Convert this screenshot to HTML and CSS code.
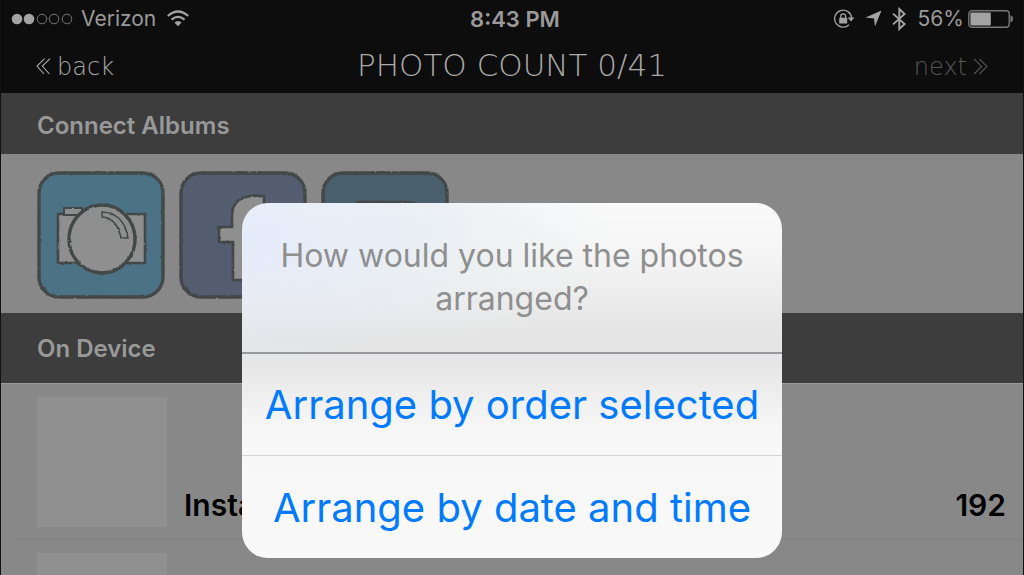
FILE: index.html
```html
<!DOCTYPE html>
<html lang="en">
<head>
<meta charset="UTF-8">
<meta name="viewport" content="width=device-width, initial-scale=1.0">
<title>Photo Count</title>
<link rel="stylesheet" href="styles.css">
</head>
<body>

<div class="screen">
    <header class="top">
        <div class="status-bar">
            <div class="status-left">
                <svg class="signal" width="62" height="12" viewBox="0 0 62 12">
                    <g fill="#a3a3a3">
                        <circle cx="6" cy="6" r="5.3"/>
                        <circle cx="18" cy="6" r="5.3"/>
                    </g>
                    <g fill="none" stroke="#777" stroke-width="1">
                        <circle cx="31" cy="6" r="4.8"/>
                        <circle cx="43" cy="6" r="4.8"/>
                        <circle cx="56" cy="6" r="4.8"/>
                    </g>
                </svg>
                <span class="carrier">Verizon</span>
                <svg class="wifi" width="22" height="17" viewBox="0 0 22 17">
                    <g fill="none" stroke="#a3a3a3" stroke-width="2.2">
                        <path d="M.8 6 Q11 -3 21.2 6"/>
                        <path d="M4.5 9.6 Q11 4 17.5 9.6"/>
                    </g>
                    <path d="M7.4 12.4 Q11 9.4 14.6 12.4 L11 16.2Z" fill="#a3a3a3"/>
                </svg>
            </div>
            <span class="time">8:43 PM</span>
            <div class="status-right">
                <svg width="22" height="20" viewBox="0 0 22 20">
                    <path d="M16 15.8 A8.5 8.5 0 1 1 18.6 9" fill="none" stroke="#a3a3a3" stroke-width="1.3"/>
                    <path d="M14.6 8.6h6.8L18 12.4Z" fill="#a3a3a3"/>
                    <rect x="6.2" y="8.8" width="8" height="5.8" rx=".6" fill="#a3a3a3"/>
                    <path d="M7.8 9V7.2a2.4 2.4 0 0 1 4.8 0V9" fill="none" stroke="#a3a3a3" stroke-width="1.3"/>
                </svg>
                <svg class="location" width="17" height="17" viewBox="0 0 17 17">
                    <path d="M16.5 .5 L10 16.5 L9 8.4 L.5 7.6Z" fill="#a3a3a3"/>
                </svg>
                <svg class="bluetooth" width="14" height="24" viewBox="0 0 14 24">
                    <path d="M1 6.6 L12.6 17 L7.3 22 V2 L12.6 7 L1 17.4" fill="none" stroke="#a3a3a3" stroke-width="1.9"/>
                </svg>
                <span class="percent">56%</span>
                <svg width="45" height="18" viewBox="0 0 45 18">
                    <rect x=".8" y=".8" width="40.4" height="16.4" rx="3" fill="none" stroke="#777" stroke-width="1.4"/>
                    <rect x="2.4" y="2.4" width="20.4" height="13.2" rx="1" fill="#a3a3a3"/>
                    <path d="M42.5 5.6 Q45 6 45 9 T42.5 12.4Z" fill="#777"/>
                </svg>
            </div>
        </div>
        <nav class="nav-bar">
            <a class="back" href="#">
                <svg width="15" height="17" viewBox="0 0 15 17">
                    <path d="M8.6 .7 L1 8 L8 16 M14 .7 L6.4 8 L13.4 16" fill="none" stroke="currentColor" stroke-width="1.1"/>
                </svg>
                back
            </a>
            <h1 class="title">PHOTO COUNT 0/41</h1>
            <a class="next" href="#">
                next
                <svg width="15" height="17" viewBox="0 0 15 17">
                    <path d="M1 1 L8.6 8.4 L1 16 M6.4 1 L14 8.4 L6.4 16" fill="none" stroke="currentColor" stroke-width="1.1"/>
                </svg>
            </a>
        </nav>
    </header>

    <main>
        <h2 class="section connect">Connect Albums</h2>
        <div class="albums">
            <button class="album" type="button" aria-label="Camera">
                <svg width="128" height="128" viewBox="0 0 128 128">
                    <defs>
                        <filter id="rough" x="-5%" y="-5%" width="110%" height="110%">
                            <feTurbulence type="fractalNoise" baseFrequency="0.25" numOctaves="2" seed="4" result="noise"/>
                            <feDisplacementMap in="SourceGraphic" in2="noise" scale="2.4" xChannelSelector="R" yChannelSelector="G"/>
                        </filter>
                    </defs>
                    <g filter="url(#rough)" stroke="#434746">
                        <rect x="2" y="2" width="124" height="124" rx="20" fill="#4c7285" stroke-width="3.4"/>
                        <path d="M21 43 L108 43 L108 92 L21 92Z" fill="#8f8f8f" stroke-width="2.6"/>
                        <path d="M27 37 H45 V44 H27Z" fill="#8f8f8f" stroke-width="2"/>
                        <ellipse cx="65" cy="68" rx="33" ry="34" fill="#8f8f8f" stroke-width="3.4"/>
                        <path d="M65 41 Q87 42 91 67 L84 67 Q80 47 65 46Z" fill="#8f8f8f" stroke-width="1.5"/>
                    </g>
                </svg>
            </button>
            <button class="album" type="button" aria-label="Facebook">
                <svg width="128" height="128" viewBox="0 0 128 128">
                    <g filter="url(#rough)" stroke="#434746">
                        <rect x="2" y="2" width="124" height="124" rx="20" fill="#555d70" stroke-width="3.4"/>
                        <path d="M85 25 V43 Q73 41 73 56 H85 V71 H73 V109 H54 V71 H40 V56 H53 V44 Q54 22 85 25Z" fill="#8f8f8f" stroke-width="2.6"/>
                    </g>
                </svg>
            </button>
            <button class="album" type="button" aria-label="Instagram">
                <svg width="128" height="128" viewBox="0 0 128 128">
                    <g filter="url(#rough)" stroke="#434746">
                        <rect x="2" y="2" width="124" height="124" rx="20" fill="#495f6c" stroke-width="3.4"/>
                        <rect x="31" y="31" width="66" height="66" rx="8" fill="#8f8f8f" stroke-width="2.6"/>
                    </g>
                </svg>
            </button>
        </div>

        <h2 class="section device">On Device</h2>
        <ul class="list">
            <li class="row">
                <div class="thumb"></div>
                <span class="name">Insta</span>
                <span class="count">192</span>
            </li>
            <li class="row">
                <div class="thumb"></div>
            </li>
        </ul>
    </main>

    <div class="overlay">
        <div class="alert" role="alertdialog" aria-labelledby="question">
            <p class="question" id="question">How would you like the photos arranged?</p>
            <button class="choice" type="button">Arrange by order selected</button>
            <button class="choice" type="button">Arrange by date and time</button>
        </div>
    </div>
</div>

</body>
</html>
```
FILE: styles.css
```css
* {
    box-sizing: border-box;
}

body {
    margin: 0;
    font-family: Inter, "Liberation Sans", sans-serif;
    background-color: #888;
}

.screen {
    position: relative;
    height: 100vh;
    overflow: hidden;
    border: solid #111;
    border-width: 0 1px;
}

.top {
    height: 93px;
    background-color: #0d0d0d;
    color: #9a9a9a;
}

.status-bar {
    display: grid;
    grid-template-columns: 1fr auto 1fr;
    align-items: center;
    height: 37px;
    padding: 0 10px;
    font-size: 21px;
}

.status-left,
.status-right {
    display: flex;
    align-items: center;
}

.status-right {
    justify-content: flex-end;
}

.carrier {
    margin: 0 11px 0 8px;
}

.time {
    padding-left: 6px;
    font-size: 22px;
    font-weight: 600;
}

.location {
    margin: 0 10px;
}

.percent {
    margin: 0 4px 0 12px;
}

.nav-bar {
    display: grid;
    grid-template-columns: 1fr auto 1fr;
    align-items: center;
    height: 56px;
    padding: 0 35px;
    font-family: "DejaVu Sans", sans-serif;
    font-weight: 200;
}

.nav-bar a {
    display: flex;
    align-items: center;
    gap: 6px;
    padding-top: 3px;
    color: #aaa;
    font-size: 24px;
    text-decoration: none;
}

.nav-bar .next {
    justify-content: flex-end;
    color: #555;
}

.title {
    margin: 0;
    color: #aaa;
    font-size: 31px;
    font-weight: 200;
}

.section {
    display: flex;
    align-items: center;
    margin: 0;
    padding: 0 36px;
    background-color: #3d3d3d;
    color: #999;
    font-size: 24px;
    font-weight: 600;
}

.connect {
    height: 61px;
    padding-top: 4px;
}

.device {
    height: 70px;
}

.albums {
    display: flex;
    gap: 14px;
    padding: 17px 36px 14px;
    background-color: #888;
}

.album {
    display: block;
    padding: 0;
    border: 0;
    background: none;
}

.album svg {
    display: block;
}

.list {
    margin: 0;
    padding: 0 0 0 15px;
    border-top: 1px solid #9a9a9a;
    list-style: none;
}

.row {
    display: flex;
    align-items: flex-end;
    padding: 13px 17px 12px 21px;
    border-bottom: 1px solid #808080;
    color: #000;
    font-size: 30px;
    font-weight: 600;
    line-height: 44px;
}

.thumb {
    width: 130px;
    height: 130px;
    margin-right: 17px;
    background-color: #909090;
}

.count {
    margin-left: auto;
}

.overlay {
    position: absolute;
    inset: 0;
    display: flex;
    justify-content: center;
    align-items: flex-start;
    padding-top: 203px;
}

.alert {
    width: 540px;
    overflow: hidden;
    border-radius: 26px;
    background:
        radial-gradient(ellipse 240px 130px at 0 35px, #e4ebfa, transparent),
        radial-gradient(ellipse 200px 110px at 170px 30px, #e9eff2, transparent),
        linear-gradient(#fafafa, #f5f5f5 50px, #e4e4e4 135px, #e6e6e6 160px, #f7f7f7 225px, #f9f9f9);
}

.question {
    margin: 0;
    padding: 31px 30px 32px;
    color: #8f8f8f;
    font-size: 32px;
    line-height: 43px;
    text-align: center;
}

.choice {
    display: block;
    width: 100%;
    height: 103px;
    padding: 0;
    border: 0;
    border-top: 1px solid #d5d5d7;
    background: none;
    color: #007aff;
    font-family: inherit;
    font-size: 40px;
    white-space: nowrap;
}

.question + .choice {
    border-top: 2px solid #99999d;
}
```
